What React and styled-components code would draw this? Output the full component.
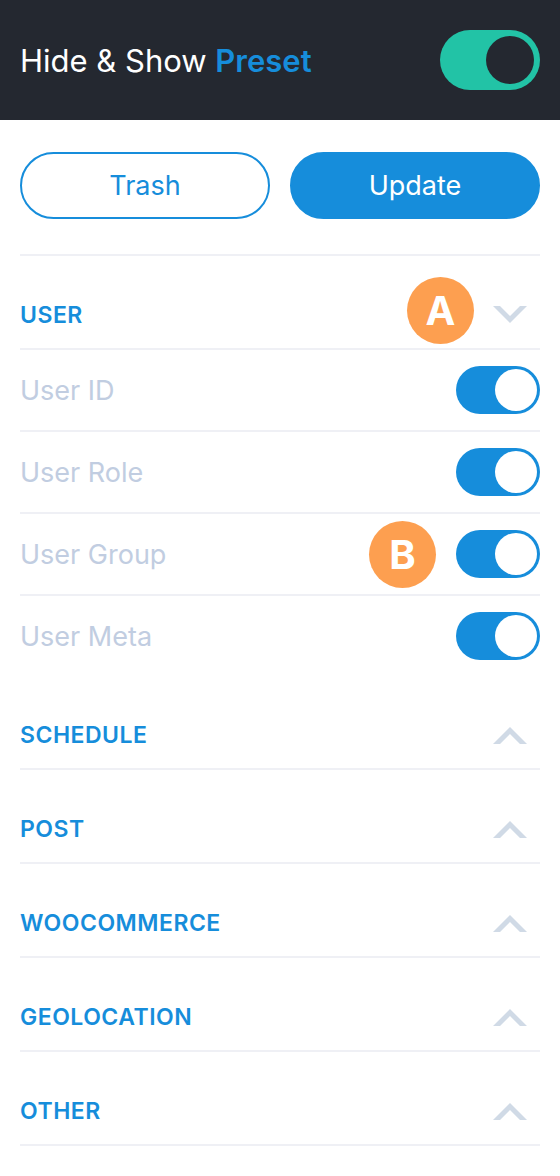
import React from "react";
import styled, { createGlobalStyle } from "styled-components";

const GlobalStyle = createGlobalStyle`
  * { box-sizing: border-box; }
  html, body { margin: 0; padding: 0; background: #ffffff; }
  body { font-family: Inter, "Noto Sans", "Liberation Sans", sans-serif; -webkit-font-smoothing: antialiased; }
`;

const BLUE = "#168ddb";
const DIVIDER = "#eff0f5";

const Page = styled.div`
  width: 560px;
  min-height: 1176px;
  background: #fff;
`;

const Header = styled.header`
  height: 120px;
  background: #242830;
  display: flex;
  align-items: center;
  justify-content: space-between;
  padding: 0 20px;
`;

const Title = styled.h1`
  margin: 0;
  font-size: 31px;
  font-weight: 400;
  color: #fff;
`;

const Accent = styled.span`
  color: ${BLUE};
  font-weight: 600;
`;

const Track = styled.div`
  display: flex;
  align-items: center;
  justify-content: flex-end;
  flex: none;
  width: ${(p) => p.$w}px;
  height: ${(p) => p.$h}px;
  border-radius: ${(p) => p.$h / 2}px;
  padding: 0 ${(p) => p.$inset}px;
  background: ${(p) => p.$bg};
`;

const Knob = styled.div`
  width: ${(p) => p.$size}px;
  height: ${(p) => p.$size}px;
  border-radius: 50%;
  background: ${(p) => p.$bg};
`;

const Body = styled.main`
  padding: 0 20px;
`;

const Actions = styled.div`
  display: flex;
  gap: 20px;
  padding: 32px 0 35px;
  border-bottom: 2px solid ${DIVIDER};
`;

const Button = styled.button`
  flex: 1;
  height: 67px;
  border-radius: 34px;
  border: 2px solid ${BLUE};
  background: ${(p) => (p.$primary ? BLUE : "#fff")};
  color: ${(p) => (p.$primary ? "#fff" : BLUE)};
  font-family: inherit;
  font-size: 27px;
  font-weight: 400;
  cursor: pointer;
`;

const SectionHeader = styled.div`
  display: flex;
  align-items: center;
  justify-content: space-between;
  height: 94px;
  padding-top: 26px;
  border-bottom: 2px solid ${DIVIDER};
`;

const SectionTitle = styled.h2`
  margin: 0;
  font-size: 23px;
  font-weight: 600;
  color: ${BLUE};
  letter-spacing: 0.5px;
`;

const RightGroup = styled.div`
  display: flex;
  align-items: center;
  gap: ${(p) => p.$gap ?? 20}px;
`;

const ChevronBox = styled.div`
  width: 60px;
  display: flex;
  justify-content: center;
  align-items: center;
`;

const Badge = styled.div`
  width: 67px;
  height: 67px;
  border-radius: 50%;
  background: #fd9f50;
  color: #fff;
  font-size: 40px;
  font-weight: 700;
  display: flex;
  align-items: center;
  justify-content: center;
  flex: none;
  margin-bottom: ${(p) => p.$lift ?? 0}px;
`;

const Row = styled.div`
  display: flex;
  align-items: center;
  justify-content: space-between;
  height: ${(p) => (p.$last ? 80 : 82)}px;
  border-bottom: ${(p) => (p.$last ? "none" : `2px solid ${DIVIDER}`)};
`;

const RowLabel = styled.span`
  font-size: 27px;
  color: #c1cde1;
  font-weight: 400;
`;

const Chevron = ({ up }) => (
  <svg width="34" height="18" viewBox="0 0 34 18" aria-hidden="true">
    <polygon
      fill="#d0dae6"
      points={
        up
          ? "0,18 17,1 34,18 27,18 17,8 7,18"
          : "0,0 17,17 34,0 27,0 17,10 7,0"
      }
    />
  </svg>
);

const Toggle = ({ header }) =>
  header ? (
    <Track $w={100} $h={60} $inset={6} $bg="#22c3a6">
      <Knob $size={48} $bg="#242830" />
    </Track>
  ) : (
    <Track $w={84} $h={48} $inset={3} $bg={BLUE}>
      <Knob $size={42} $bg="#fff" />
    </Track>
  );

const userItems = [
  { label: "User ID" },
  { label: "User Role" },
  { label: "User Group", badge: "B" },
  { label: "User Meta" },
];

const collapsed = ["SCHEDULE", "POST", "WOOCOMMERCE", "GEOLOCATION", "OTHER"];

export default function App() {
  return (
    <Page>
      <GlobalStyle />
      <Header>
        <Title>
          Hide &amp; Show <Accent>Preset</Accent>
        </Title>
        <Toggle header />
      </Header>
      <Body>
        <Actions>
          <Button>Trash</Button>
          <Button $primary>Update</Button>
        </Actions>

        <SectionHeader>
          <SectionTitle>USER</SectionTitle>
          <RightGroup $gap={6}>
            <Badge $lift={10}>A</Badge>
            <ChevronBox>
              <Chevron />
            </ChevronBox>
          </RightGroup>
        </SectionHeader>
        {userItems.map((it, i) => (
          <Row key={it.label} $last={i === userItems.length - 1}>
            <RowLabel>{it.label}</RowLabel>
            <RightGroup $gap={20}>
              {it.badge && <Badge>{it.badge}</Badge>}
              <Toggle />
            </RightGroup>
          </Row>
        ))}

        {collapsed.map((name) => (
          <SectionHeader key={name}>
            <SectionTitle>{name}</SectionTitle>
            <ChevronBox>
              <Chevron up />
            </ChevronBox>
          </SectionHeader>
        ))}
      </Body>
    </Page>
  );
}
